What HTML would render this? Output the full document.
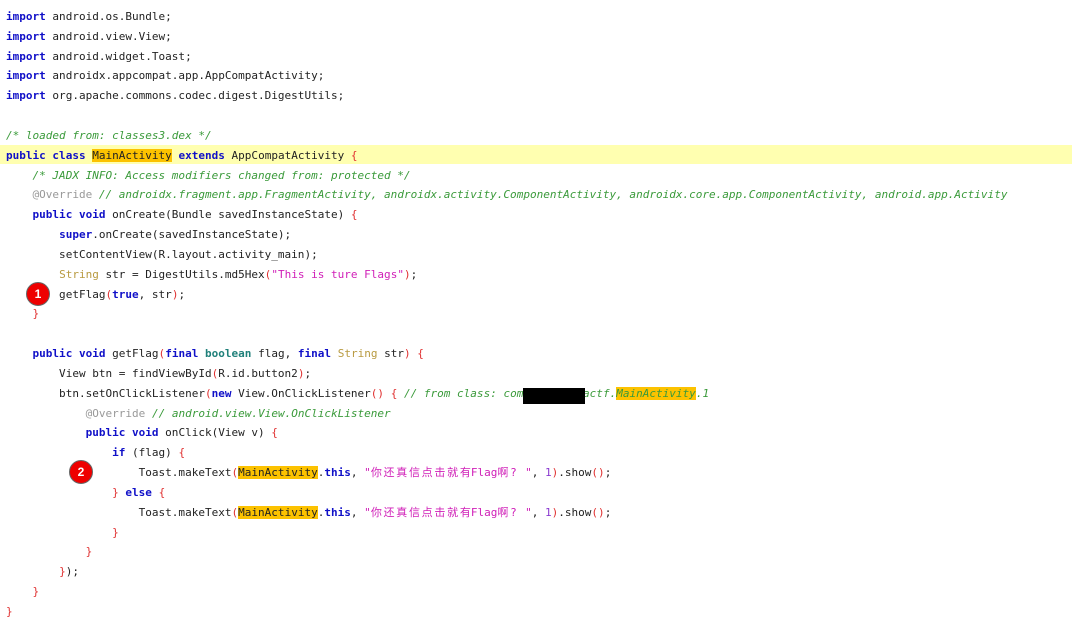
<!DOCTYPE html>
<html><head><meta charset="utf-8"><style>
body{margin:0;width:1080px;height:619px;background:#fff;overflow:hidden;position:relative}
pre{margin:0;position:absolute;left:6px;top:7px;font-family:"DejaVu Sans Mono","Noto Sans CJK SC",monospace;font-size:11.02px;line-height:19.83px;color:#222;white-space:pre}
.k{color:#1010c8;font-weight:bold}
.c{color:#3a9a3a;font-style:italic}
.s{color:#d020b8}
.t{color:#b89a40}
.b{color:#20807a;font-weight:bold}
.r{color:#e03030}
.n{color:#8a3ad0}
.a{color:#999}
.h{background:#fcc200}
.z{letter-spacing:1.7px}
.hl{position:absolute;left:0;width:1072px;top:145px;height:19px;background:#ffffb0}
.circ{position:absolute;width:22px;height:22px;border-radius:50%;background:#e00;border:1.5px solid #666;color:#fff;font:bold 12px "Liberation Sans",sans-serif;text-align:center;line-height:22px;box-sizing:content-box}
</style></head><body>
<div class="hl"></div>
<pre><span class="k">import</span> android.os.Bundle;
<span class="k">import</span> android.view.View;
<span class="k">import</span> android.widget.Toast;
<span class="k">import</span> androidx.appcompat.app.AppCompatActivity;
<span class="k">import</span> org.apache.commons.codec.digest.DigestUtils;

<span class="c">/* loaded from: classes3.dex */</span>
<span class="k">public class</span> <span class="h">MainActivity</span> <span class="k">extends</span> AppCompatActivity <span class="r">{</span>
    <span class="c">/* JADX INFO: Access modifiers changed from: protected */</span>
    <span class="a">@Override</span> <span class="c">// androidx.fragment.app.FragmentActivity, androidx.activity.ComponentActivity, androidx.core.app.ComponentActivity, android.app.Activity</span>
    <span class="k">public void</span> onCreate(Bundle savedInstanceState) <span class="r">{</span>
        <span class="k">super</span>.onCreate(savedInstanceState);
        setContentView(R.layout.activity_main);
        <span class="t">String</span> str = DigestUtils.md5Hex<span class="r">(</span><span class="s">"This is ture Flags"</span><span class="r">)</span>;
        getFlag<span class="r">(</span><span class="k">true</span>, str<span class="r">)</span>;
    <span class="r">}</span>

    <span class="k">public void</span> getFlag<span class="r">(</span><span class="k">final</span> <span class="b">boolean</span> flag, <span class="k">final</span> <span class="t">String</span> str<span class="r">)</span> <span class="r">{</span>
        View btn = findViewById<span class="r">(</span>R.id.button2<span class="r">)</span>;
        btn.setOnClickListener<span class="r">(</span><span class="k">new</span> View.OnClickListener<span class="r">()</span> <span class="r">{</span> <span class="c">// from class: com         actf.<span class="h">MainActivity</span>.1</span>
            <span class="a">@Override</span> <span class="c">// android.view.View.OnClickListener</span>
            <span class="k">public void</span> onClick(View v) <span class="r">{</span>
                <span class="k">if</span> (flag) <span class="r">{</span>
                    Toast.makeText<span class="r">(</span><span class="h">MainActivity</span>.<span class="k">this</span>, <span class="s">"<span class="z">你还真信点击就</span>有Flag<span class="z">啊?</span> "</span>, <span class="n">1</span><span class="r">)</span>.show<span class="r">()</span>;
                <span class="r">}</span> <span class="k">else</span> <span class="r">{</span>
                    Toast.makeText<span class="r">(</span><span class="h">MainActivity</span>.<span class="k">this</span>, <span class="s">"<span class="z">你还真信点击就</span>有Flag<span class="z">啊?</span> "</span>, <span class="n">1</span><span class="r">)</span>.show<span class="r">()</span>;
                <span class="r">}</span>
            <span class="r">}</span>
        <span class="r">}</span>);
    <span class="r">}</span>
<span class="r">}</span></pre>
<div style="position:absolute;left:523px;top:388px;width:62px;height:16px;background:#000"></div>
<div class="circ" style="left:26px;top:282px">1</div>
<div class="circ" style="left:69px;top:460px">2</div>
</body></html>
